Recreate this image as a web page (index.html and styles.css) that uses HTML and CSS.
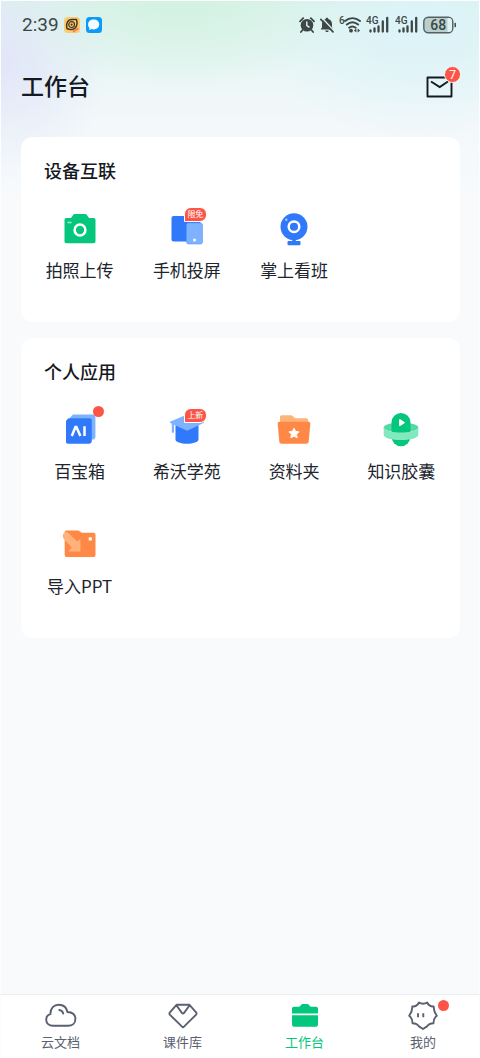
FILE: index.html
```html
<!DOCTYPE html>
<html lang="zh-CN">
<head>
<meta charset="utf-8">
<meta name="viewport" content="width=device-width, initial-scale=1">
<title>工作台</title>
<link rel="stylesheet" href="styles.css">
</head>
<body>
<div class="page">
  <div class="status">
    <div class="status-left">
      <span class="time">2:39</span>
      <svg width="16" height="16" viewBox="0 0 16 16" aria-hidden="true">
        <rect width="16" height="16" rx="3.5" fill="#fbcb74"/>
        <path d="M3 11.5C1.500 7 3.500 2.500 8 2.500h4.500C14 7 12.500 12 8 12.500c-2 .2-3 .2-5-1z" fill="none" stroke="#46351c" stroke-width="1.500"/>
        <circle cx="7.600" cy="7.600" r="2.900" fill="none" stroke="#46351c" stroke-width="1.200"/>
        <circle cx="7.600" cy="7.600" r="1.100" fill="#46351c"/>
        <path d="M9 14.800l5.500-3.500" stroke="#f8785c" stroke-width="1.800"/>
      </svg>
      <svg class="chat-app" width="16" height="16" viewBox="0 0 16 16" aria-hidden="true">
        <rect width="16" height="16" rx="3.500" fill="#0a9bf8"/>
        <path d="M7.600 2.600c3.300 0 5.600 2 5.600 4.900s-2.300 4.900-5.600 4.900c-.8 0-1.300-.1-1.900-.3L3 13l.5-2.100C2.500 10 2.100 8.900 2.100 7.500c0-2.900 2.300-4.900 5.500-4.900z" fill="#f4fcff"/>
      </svg>
    </div>
    <div class="status-right">
      <svg width="16" height="16" viewBox="0 0 16 16" aria-hidden="true">
        <circle cx="8" cy="8.200" r="6.300" fill="#3d4745"/>
        <path d="M1 4.300L4.200 1.200M15 4.300L11.800 1.200M3.600 13L1.900 15M12.400 13l1.700 2" stroke="#3d4745" stroke-width="1.800" stroke-linecap="round"/>
        <path d="M7.800 4.600v4l2.700 1.800" fill="none" stroke="#e4f5f2" stroke-width="1.400"/>
      </svg>
      <svg width="14" height="16" viewBox="0 0 14 16" aria-hidden="true">
        <path d="M7 .8c.8 0 1.300.5 1.300 1.200C10.700 2.600 12 4.500 12 7v3.200l1.300 2.300H.7L2 10.200V7c0-2.500 1.300-4.400 3.700-5C5.700 1.300 6.200.8 7 .8zM5.200 13.500h3.600c-.2 1-.9 1.600-1.800 1.600s-1.600-.6-1.800-1.600z" fill="#3d4745"/>
        <path d="M2.300 1.300l11.200 11.900" stroke="#e0f5ef" stroke-width="1.300"/>
        <path d="M.8 2.300l12.200 12.500" stroke="#3d4745" stroke-width="1.700" stroke-linecap="round"/>
      </svg>
      <svg width="22" height="18" viewBox="0 0 22 18" aria-hidden="true">
        <text x="0" y="8" class="net">6</text>
        <g fill="none" stroke="#3d4745" stroke-width="2" stroke-linecap="round">
          <path d="M6 5c4.500-3.600 10.300-3.600 15 0M7.900 8.500c3.400-2.900 7.600-2.900 11.200 0M10.200 11.700c2-1.600 4.400-1.600 6.400 0"/>
        </g>
        <circle cx="12" cy="14.700" r="1.900" fill="#3d4745"/>
        <path d="M17.400 12.600v4l-2.500-2zM18.600 12.600v4l2.500-2z" fill="#3d4745"/>
      </svg>
      <svg width="23" height="18" viewBox="0 0 23 18" aria-hidden="true">
        <text x="0" y="8" class="net">4G</text>
        <path d="M4.500 14.500v1M8.500 12.500v3M12.500 10.500v5M16.800 5.500v10M21.200 2v13.500" stroke="#3d4745" stroke-width="2.300" stroke-linecap="round"/>
      </svg>
      <svg class="signal-two" width="23" height="18" viewBox="0 0 23 18" aria-hidden="true">
        <text x="0" y="8" class="net">4G</text>
        <path d="M4.500 14.500v1M8.500 12.500v3M12.500 10.500v5M16.800 5.500v10M21.200 2v13.500" stroke="#3d4745" stroke-width="2.300" stroke-linecap="round"/>
      </svg>
      <svg width="34" height="18" viewBox="0 0 34 18" aria-hidden="true">
        <rect x=".8" y="1.200" width="29" height="15.600" rx="4.500" fill="#b9cfcf" stroke="#56605f" stroke-width="1.400"/>
        <path d="M24.500 2h1.500c2 0 3 1.500 3 3.500v7c0 2-1 3.500-3 3.500h-1.500z" fill="#def2f5"/>
        <path d="M32.200 7.500v3" stroke="#3d4745" stroke-width="1.500" stroke-linecap="round"/>
        <text x="15.200" y="14" text-anchor="middle" class="battery">68</text>
      </svg>
    </div>
  </div>

  <header class="header">
    <h1>工作台</h1>
    <button class="mail" aria-label="消息">
      <svg width="28" height="22" viewBox="0 0 28 22" aria-hidden="true">
        <path d="M1.500 1.500h24v19h-24z" fill="none" stroke="#151922" stroke-width="1.900" stroke-linejoin="round"/>
        <path d="M5 5.500l8.700 5.500 8.300-5.500" fill="none" stroke="#151922" stroke-width="1.900"/>
      </svg>
      <span class="count">7</span>
    </button>
  </header>

  <main class="content">
    <section class="card">
      <h2>设备互联</h2>
      <div class="grid">
        <button class="app">
          <span class="icon">
            <svg width="48" height="48" viewBox="0 0 48 48" aria-hidden="true">
              <path d="M10.500 13H15l2.300-3.200c.4-.6.900-.8 1.500-.8h10.400c.6 0 1.100.2 1.500.8L33 13h4.500c1.300 0 2 .7 2 2v21.200c0 1.300-.7 2-2 2h-27c-1.300 0-2-.7-2-2V15c0-1.300.7-2 2-2z" fill="#05c67d"/>
              <circle cx="24" cy="25" r="5.400" fill="none" stroke="#fff" stroke-width="2.500"/>
              <path d="M11.500 17.500h4" stroke="#a5ebcf" stroke-width="1.500"/>
            </svg>
          </span>
          <span class="label">拍照上传</span>
        </button>
        <button class="app">
          <span class="icon">
            <svg width="48" height="48" viewBox="0 0 48 48" aria-hidden="true">
              <rect x="8.500" y="11" width="29" height="25.500" rx="2" fill="#3179fb"/>
              <rect x="23.500" y="18" width="16" height="21" rx="2" fill="#7eb2ff" stroke="#5a97fd" stroke-width=".6"/>
              <circle cx="31.500" cy="35" r="1.500" fill="#fff"/>
            </svg>
            <span class="tag">限免</span>
          </span>
          <span class="label">手机投屏</span>
        </button>
        <button class="app">
          <span class="icon">
            <svg width="48" height="48" viewBox="0 0 48 48" aria-hidden="true">
              <circle cx="24" cy="21.700" r="13.500" fill="#3179fb"/>
              <path d="M22.200 33h3.600v3h3.700c.6 0 1 .4 1 1v2.200c0 .6-.4 1-1 1h-11c-.6 0-1-.4-1-1V37c0-.6.400-1 1-1h3.700z" fill="#3179fb"/>
              <circle cx="24" cy="21.700" r="5.300" fill="none" stroke="#fff" stroke-width="2.500"/>
              <circle cx="16.300" cy="14.800" r="1.200" fill="#a6c8ff"/>
            </svg>
          </span>
          <span class="label">掌上看班</span>
        </button>
      </div>
    </section>

    <section class="card">
      <h2>个人应用</h2>
      <div class="grid">
        <button class="app">
          <span class="icon">
            <svg width="48" height="48" viewBox="0 0 48 48" aria-hidden="true">
              <path d="M17 8.600h20c1.600 0 2.400.8 2.400 2.400V31c0 1.500-1.200 2.600-2.400 2.600H14V11.500z" fill="#7eb2ff"/>
              <path d="M12.500 12.300h21c1.400 0 2.300.9 2.300 2.300V35c0 1.500-1.200 2.700-2.700 2.700H12c-1.300 0-2-.7-2-2V14.800z" fill="#3179fb"/>
              <path d="M15.800 30l3.600-9h1l4 9M28.500 20.200V30" fill="none" stroke="#fff" stroke-width="2.500"/>
            </svg>
            <span class="dot"></span>
          </span>
          <span class="label">百宝箱</span>
        </button>
        <button class="app">
          <span class="icon">
            <svg width="48" height="48" viewBox="0 0 48 48" aria-hidden="true">
              <path d="M12.500 19h23v14.500c0 2.700-5.500 4.200-11.500 4.200s-11.500-1.500-11.500-4.200z" fill="#3179fb"/>
              <path d="M7.500 15.500L23 9c.8-.3 1.500-.3 2.300 0l15.200 6.500c.8.400.8 1 0 1.400l-15.200 7.400c-.8.400-1.500.400-2.300 0l-12-5.600v7.200c0 1.200-2.200 1.200-2.200 0v-8.200l-1.300-.8c-.8-.4-.8-1 0-1.400z" fill="#7eb2ff"/>
            </svg>
            <span class="tag">上新</span>
          </span>
          <span class="label">希沃学苑</span>
        </button>
        <button class="app">
          <span class="icon">
            <svg width="48" height="48" viewBox="0 0 48 48" aria-hidden="true">
              <path d="M12 9.300h8.500c1 0 1.700.3 2.500 1l2.200 1.900h11c1.300 0 2 .7 2 2V22H10V11.300c0-1.300.7-2 2-2z" fill="#ffb27a"/>
              <path d="M9.700 15.800h28.600c1.400 0 2.200.9 2 2.200l-1.600 17.500c-.1 1.300-1 2.200-2.300 2.200H11.600c-1.300 0-2.200-.9-2.300-2.200L7.700 18c-.2-1.300.600-2.200 2-2.200z" fill="#ff8847"/>
              <path d="M24 22.200l1.600 3.200 3.500.5-2.600 2.400.7 3.500-3.200-1.700-3.200 1.700.7-3.500-2.600-2.400 3.500-.5z" fill="#fff" stroke="#fff" stroke-width="1" stroke-linejoin="round"/>
            </svg>
          </span>
          <span class="label">资料夹</span>
        </button>
        <button class="app">
          <span class="icon">
            <svg width="48" height="48" viewBox="0 0 48 48" aria-hidden="true">
              <ellipse cx="24" cy="21.500" rx="17.300" ry="5" fill="#54d9a4"/>
              <rect x="14.500" y="7" width="19" height="33.300" rx="9.500" fill="#05c67d"/>
              <path d="M6.700 21.500C8 25.500 17 26.500 24 26.500s16-1 17.300-5v7.500c0 3-8.500 5-17.300 5S6.700 32 6.700 29z" fill="#82e9bf"/>
              <path d="M22.800 14l4.200 2.700-4.200 2.700z" fill="#fff" stroke="#fff" stroke-width="1.500" stroke-linejoin="round"/>
            </svg>
          </span>
          <span class="label">知识胶囊</span>
        </button>
        <button class="app">
          <span class="icon">
            <svg width="48" height="48" viewBox="0 0 48 48" aria-hidden="true">
              <path d="M10.500 9.400h11c1 0 1.800.3 2.500 1l1.600 1.400h12c1.200 0 1.900.7 1.900 1.900v20.400c0 1.200-.7 1.900-1.900 1.900h-27c-1.200 0-1.900-.7-1.900-1.900V11.300c0-1.200.7-1.900 1.900-1.900z" fill="#ff8847"/>
              <path d="M6.800 15.500c-.6-3.600 3.400-5.700 6-3.200l8.300 8.300 2.700-2c.4-.3.700 0 .7.400v10.500c0 .6-.4 1-1 1H13.400c-.6 0-.8-.5-.4-.9l2.800-3-7.300-7.800c-.9-1-1.500-2.100-1.700-3.300z" fill="#ffb27a"/>
              <rect x="32.700" y="16.300" width="3.200" height="3.200" rx=".6" fill="#fff"/>
            </svg>
          </span>
          <span class="label">导入PPT</span>
        </button>
      </div>
    </section>
  </main>

  <nav class="tabs">
    <a class="tab" href="#docs">
      <svg width="32" height="32" viewBox="0 0 32 32" aria-hidden="true">
        <g fill="none" stroke="#5b6070" stroke-width="1.900" stroke-linecap="round">
          <path d="M8 25.800c-4 0-6.800-2.400-6.800-6 0-2.800 1.600-5 4.200-5.700C5.300 8.300 9 4.700 13.800 4.700c4.500 0 7.800 2.700 8.700 7.300 4.900.3 7.900 3 7.900 6.900 0 4.200-3.100 6.900-7.400 6.900z"/>
          <path d="M14.300 10c2 .2 3.400 1.500 3.900 3.600"/>
        </g>
      </svg>
      <span>云文档</span>
    </a>
    <a class="tab" href="#library">
      <svg width="32" height="32" viewBox="0 0 32 32" aria-hidden="true">
        <path d="M9.500 4.800h13l7 8-.1 1.500L17 26.700c-.6.600-1.400.6-2 0L2.500 14.300v-1.500zM9.500 5.500l5.600 7.600c.5.600 1.300.6 1.800 0l5.600-7.600" fill="none" stroke="#5b6070" stroke-width="1.900" stroke-linejoin="round"/>
      </svg>
      <span>课件库</span>
    </a>
    <a class="tab active" href="#workbench" aria-current="page">
      <svg width="32" height="32" viewBox="0 0 32 32" aria-hidden="true">
        <path d="M5 6.800h5.500l1.700-2c.5-.6 1-.8 1.600-.8h4.400c.6 0 1.100.2 1.600.8l1.700 2H27c1.200 0 2 .8 2 2v4.700H3V8.800c0-1.200.8-2 2-2zM3 15.200h26v9c0 1.600-1 2.600-2.600 2.600H5.600C4 26.800 3 25.800 3 24.200z" fill="#05c67d"/>
      </svg>
      <span>工作台</span>
    </a>
    <a class="tab" href="#mine">
      <svg width="32" height="32" viewBox="0 0 32 32" aria-hidden="true">
        <path d="M12 2.500q4 2.600 8.200 0 2 4.300 6.500 3.900-.2 4.600 3.100 9.300-3.400 2.800-3.300 7.500-4.700.2-6.500 3.200L16 29l-4-2.600q-1.800-3-6.500-3.200.1-4.700-3.300-7.500Q5.500 11 5.300 6.400 10 6.800 12 2.500z" fill="none" stroke="#5b6070" stroke-width="1.900" stroke-linejoin="round"/>
        <path d="M11 13.300v4M16.300 13.300v4" stroke="#5b6070" stroke-width="1.900"/>
      </svg>
      <span>我的</span>
      <i class="dot tab-dot"></i>
    </a>
  </nav>
</div>
</body>
</html>
```
FILE: styles.css
```css
* {
  box-sizing: border-box;
}

body {
  margin: 0;
  font-family: Roboto, "Noto Sans CJK SC", sans-serif;
  color: #20242d;
}

h1,
h2 {
  margin: 0;
  font-weight: 500;
  color: #151922;
}

button {
  padding: 0;
  border: 0;
  background: none;
  font: inherit;
  color: inherit;
}

svg {
  display: block;
}

.page {
  display: flex;
  flex-direction: column;
  min-height: 100vh;
  border: 1px solid #fcfdfe;
  border-bottom: 0;
  background:
    radial-gradient(ellipse 180px 90px at 38% 0, #d2f2e2 0, #d2f2e200 100%) no-repeat,
    radial-gradient(ellipse 110px 120px at 0 60px, #e1e6f8 0, #e1e6f800 100%) no-repeat,
    radial-gradient(ellipse 170px 120px at 88% 20px, #dbf3f9 0, #dbf3f900 100%) no-repeat,
    linear-gradient(#dff3ee 0, #e9f6f5 60px, #f3f8fa 120px, #f8fafc 200px);
}

.status {
  display: flex;
  align-items: center;
  justify-content: space-between;
  height: 48px;
  padding: 0 22px 0 21px;
}

.status-left,
.status-right {
  display: flex;
  align-items: center;
  gap: 5px;
}

.chat-app,
.signal-two {
  margin-left: 1px;
}

.time {
  font-size: 19px;
  line-height: 24px;
  color: #3d4745;
}

.net {
  font: 500 10px Roboto, sans-serif;
  fill: #3d4745;
}

.battery {
  font: 500 14px Roboto, sans-serif;
  fill: #3d4745;
}

.header {
  display: flex;
  align-items: center;
  justify-content: space-between;
  height: 76px;
  padding: 0 25px 0 20px;
}

.header h1 {
  padding-top: 2px;
  font-size: 23px;
  line-height: 32px;
}

.mail {
  position: relative;
}

.count {
  position: absolute;
  top: -10px;
  right: -7px;
  width: 17px;
  height: 17px;
  border: 1px solid #eef9fb;
  border-radius: 50%;
  background: #fc5447;
  color: #fff;
  font-size: 12px;
  line-height: 16px;
  text-align: center;
}

.content {
  display: flex;
  flex: 1;
  flex-direction: column;
  gap: 16px;
  padding: 12px 19px 24px 20px;
}

.card {
  padding: 23px 5px 40px;
  border-radius: 12px;
  background: #fff;
}

.card h2 {
  padding-left: 18px;
  font-size: 18px;
  line-height: 24px;
}

.grid {
  display: grid;
  grid-template-columns: repeat(4, 1fr);
  row-gap: 38px;
  margin-top: 21px;
}

.app {
  display: flex;
  flex-direction: column;
  align-items: center;
  gap: 5px;
}

.icon {
  position: relative;
}

.label {
  font-family: "Noto Sans CJK SC", sans-serif;
  font-size: 17px;
  line-height: 24px;
}

.tag {
  position: absolute;
  top: 2px;
  left: 21px;
  width: 23px;
  height: 15px;
  border: 1px solid #fff;
  border-radius: 7px 7px 7px 0;
  background: #fc5447;
  color: #fff;
  font-size: 8px;
  line-height: 14px;
  text-align: center;
}

.dot {
  position: absolute;
  top: 0;
  right: 0;
  width: 11px;
  height: 11px;
  border-radius: 50%;
  background: #fc5447;
}

.tabs {
  display: flex;
  justify-content: space-between;
  height: 64px;
  padding: 5px 40px 0;
  border-top: 1px solid #eceff2;
  background: #fff;
}

.tab {
  position: relative;
  display: flex;
  flex-direction: column;
  align-items: center;
  color: #5b6070;
  font-size: 13px;
  line-height: 22px;
  text-decoration: none;
}

.active {
  color: #05c67d;
}

.tab-dot {
  right: -10px;
}
```
